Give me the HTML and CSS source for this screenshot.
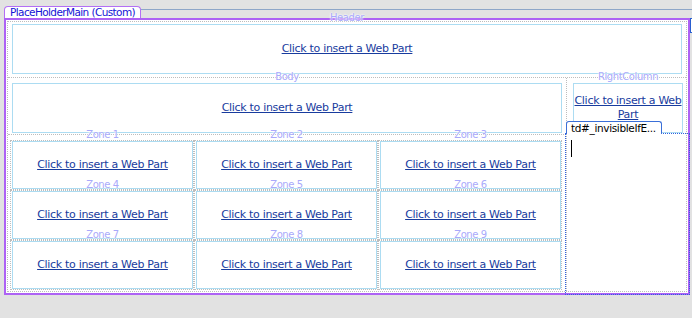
FILE: index.html
```html
<!DOCTYPE html>
<html>
<head>
<meta charset="utf-8">
<title>PlaceHolderMain</title>
<link rel="stylesheet" href="styles.css">
</head>
<body>
<div class="page">
  <div class="tabrow">
    <div class="ph-tab">PlaceHolderMain (Custom)</div>
    <div class="tabrule"></div>
  </div>
  <div class="ph">
    <div class="layout">
      <div class="header-cell">
        <div class="zone"><span class="zlabel">Header</span><a class="wp" href="#">Click to insert a Web Part</a></div>
      </div>
      <div class="row2">
        <div class="leftcol">
          <div class="body-cell">
            <div class="zone"><span class="zlabel">Body</span><a class="wp" href="#">Click to insert a Web Part</a></div>
          </div>
          <div class="zones">
            <div class="zcell"><div class="zone zbox"><span class="zlabel">Zone 1</span><a class="wp" href="#">Click to insert a Web Part</a></div></div>
            <div class="zcell"><div class="zone zbox"><span class="zlabel">Zone 2</span><a class="wp" href="#">Click to insert a Web Part</a></div></div>
            <div class="zcell"><div class="zone zbox"><span class="zlabel">Zone 3</span><a class="wp" href="#">Click to insert a Web Part</a></div></div>
            <div class="zcell"><div class="zone zbox"><span class="zlabel">Zone 4</span><a class="wp" href="#">Click to insert a Web Part</a></div></div>
            <div class="zcell"><div class="zone zbox"><span class="zlabel">Zone 5</span><a class="wp" href="#">Click to insert a Web Part</a></div></div>
            <div class="zcell"><div class="zone zbox"><span class="zlabel">Zone 6</span><a class="wp" href="#">Click to insert a Web Part</a></div></div>
            <div class="zcell"><div class="zone zbox"><span class="zlabel">Zone 7</span><a class="wp" href="#">Click to insert a Web Part</a></div></div>
            <div class="zcell"><div class="zone zbox"><span class="zlabel">Zone 8</span><a class="wp" href="#">Click to insert a Web Part</a></div></div>
            <div class="zcell"><div class="zone zbox"><span class="zlabel">Zone 9</span><a class="wp" href="#">Click to insert a Web Part</a></div></div>
          </div>
        </div>
        <div class="rightcol">
          <div class="zone"><span class="zlabel">RightColumn</span><a class="wp" href="#">Click to insert a Web<br>Part</a></div>
        </div>
      </div>
    </div>
    <div class="sel">
      <div class="sel-tab">td#_invisibleIfE...</div>
      <div class="caret"></div>
    </div>
    <div class="edge-tab"></div>
  </div>
</div>
</body>
</html>
```

FILE: styles.css
```css
html, body {
  margin: 0;
  padding: 0;
}
body {
  background: #e2e2e2;
  font-family: "DejaVu Sans", "Liberation Sans", sans-serif;
  width: 692px;
  height: 318px;
  overflow: hidden;
}
.page {
  padding-left: 4px;
}
.tabrow {
  display: flex;
  height: 18px;
}
.ph-tab {
  box-sizing: border-box;
  width: 137px;
  height: 12px;
  margin-top: 6px;
  padding: 0 0 0 5px;
  border: 1px solid #b36ff5;
  border-bottom: none;
  border-radius: 4px 4px 0 0;
  background: #fff;
  color: #1414d6;
  font-size: 10.5px;
  line-height: 11px;
  letter-spacing: -0.6px;
  white-space: nowrap;
}
.tabrule {
  flex: 1;
  margin-top: 9px;
  height: 0;
  border-top: 1px solid #8ea6c8;
}
.ph {
  position: relative;
  box-sizing: border-box;
  width: 686px;
  height: 277px;
  border: 2px solid #ad62f4;
  background: #fff;
}
.layout {
  box-sizing: border-box;
  height: calc(100% - 2px);
  margin: 1px;
  border: 1px dotted #bdbdbd;
  display: flex;
  flex-direction: column;
}
.header-cell {
  padding: 2px 4px 3px 4px;
  border-bottom: 1px dotted #bdbdbd;
}
.zone {
  position: relative;
  box-sizing: border-box;
  height: 50px;
  border: 1px solid #acdcf2;
  display: flex;
  align-items: center;
  justify-content: center;
  text-align: center;
}
.zbox {
  height: 48px;
}
.zlabel {
  position: absolute;
  top: -13px;
  left: 50%;
  transform: translateX(-50%);
  font-size: 10px;
  line-height: 12px;
  letter-spacing: -0.4px;
  color: #a9a9fb;
  white-space: nowrap;
  text-shadow: 0 0 2px #fff, 0 0 2px #fff;
}
.wp {
  color: #183c9e;
  text-decoration: underline;
  font-size: 11px;
  line-height: 14px;
  letter-spacing: -0.3px;
}
.row2 {
  flex: 1;
  display: flex;
}
.leftcol {
  width: 558px;
  display: flex;
  flex-direction: column;
}
.body-cell {
  padding: 5px 4px 1px 4px;
  border-bottom: 1px dotted #bdbdbd;
}
.zones {
  flex: 1;
  display: grid;
  grid-template-columns: repeat(3, 184px);
  grid-auto-rows: 50px;
  padding: 5px 2px 1px 2px;
}
.zcell {
  border: 1px dotted #bdbdbd;
  padding-left: 1px;
}
.rightcol {
  flex: 1;
  border-left: 1px dotted #bdbdbd;
  padding: 5px 3px 0 6px;
}
.sel {
  position: absolute;
  left: 559px;
  top: 113px;
  width: 125px;
  height: 162px;
  box-sizing: border-box;
  border: 1px dotted #2f62e0;
}
.sel-tab {
  position: absolute;
  left: 0;
  top: -13px;
  box-sizing: border-box;
  width: 96px;
  height: 13px;
  padding-left: 4px;
  border: 1px solid #3a6fd8;
  border-bottom: none;
  border-radius: 3px 3px 0 0;
  background: #fff;
  color: #000;
  font-size: 10.5px;
  line-height: 12px;
  letter-spacing: -0.35px;
  white-space: nowrap;
}
.caret {
  position: absolute;
  left: 5px;
  top: 6px;
  width: 1px;
  height: 17px;
  background: #000;
}
.edge-tab {
  position: absolute;
  left: 684px;
  top: -2px;
  width: 8px;
  height: 13px;
  border: 1px solid #2a5fd0;
  background: #fff;
}
```
